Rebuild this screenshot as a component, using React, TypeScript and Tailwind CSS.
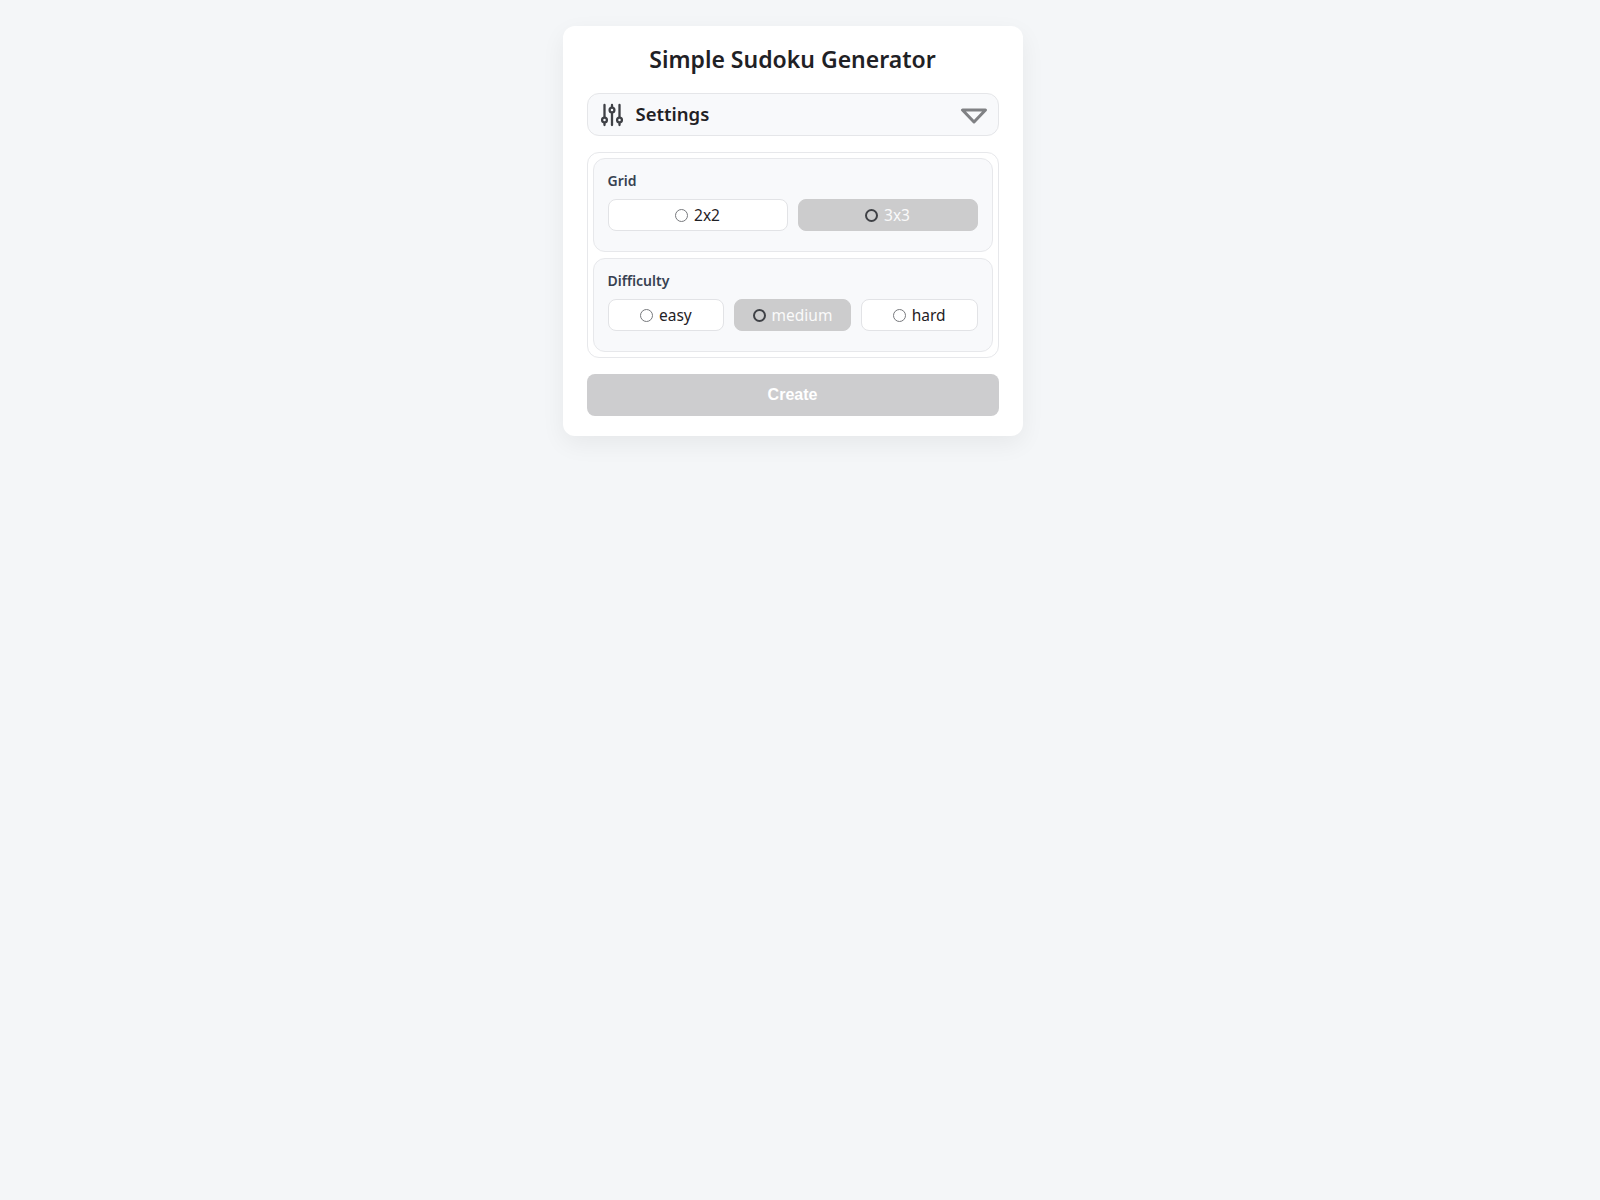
import React from "react";

const ui = "font-['Noto_Sans','Open_Sans',sans-serif]";

function Radio({ label, selected }: { label: string; selected?: boolean }) {
  return (
    <button
      className={
        "flex-1 h-8 flex items-center justify-center gap-[6px] rounded-lg border text-[15.5px] leading-6 " +
        (selected
          ? "bg-[#cccccd] border-[#cccccd] text-[#fafafa]"
          : "bg-white border-[#e2e3e6] text-[#1f2125]")
      }
    >
      <span
        className={
          "w-[13px] h-[13px] rounded-full bg-transparent " +
          (selected ? "border-2 border-[#3f4146]" : "border border-[#77797d]")
        }
      />
      {label}
    </button>
  );
}

function Group({ title, options, selected }: { title: string; options: string[]; selected: string }) {
  return (
    <div className="rounded-xl border border-[#e7e8eb] bg-[#f8f9fb] pt-[13px] px-[14px] h-[94px]">
      <div className="text-[14px] font-semibold leading-[18px] text-[#374151] mb-[9px]">{title}</div>
      <div className="flex gap-[10px]">
        {options.map((o) => (
          <Radio key={o} label={o} selected={o === selected} />
        ))}
      </div>
    </div>
  );
}

export default function App() {
  return (
    <div className={"min-h-[1200px] bg-[#f4f6f8] flex flex-col items-center pt-[26px] pr-[15px] " + ui}>
      <div className="w-[460px] bg-white rounded-xl px-6 py-5 shadow-[0_8px_24px_rgba(0,0,0,0.06)]">
        <h1 className="text-[23px] font-semibold leading-[26px] text-center text-[#1f2125] mb-[21px]">Simple Sudoku Generator</h1>
        <div className="h-[43px] rounded-xl border border-[#e5e6e9] bg-[#f8f9fb] flex items-center justify-between pl-[13px] pr-[10px]">
          <div className="flex items-center gap-[13px]">
            <svg width="22" height="24" viewBox="0 0 22 24" fill="none" stroke="#3f4146" strokeWidth="2.3" strokeLinecap="round">
              <path d="M3.5 2v12M3.5 20v2M11 2v2M11 10v12M18.5 2v12M18.5 20v2" />
              <circle cx="3.5" cy="17" r="2.4" />
              <circle cx="11" cy="7" r="2.4" />
              <circle cx="18.5" cy="17" r="2.4" />
            </svg>
            <span className="text-[18.5px] font-semibold leading-6 -translate-y-px text-[#1f2125]">Settings</span>
          </div>
          <svg className="translate-y-px" width="28" height="16" viewBox="0 0 28 16" fill="none" stroke="#808184" strokeWidth="3">
            <path d="M2.5 2h23L14 14z" strokeLinejoin="round" />
          </svg>
        </div>
        <div className="mt-4 rounded-xl border border-[#e7e8eb] p-[5px] flex flex-col gap-[6px]">
          <Group title="Grid" options={["2x2", "3x3"]} selected="3x3" />
          <Group title="Difficulty" options={["easy", "medium", "hard"]} selected="medium" />
        </div>
        <button className="mt-4 w-full h-[42px] rounded-lg bg-[#cdcdcf] text-white font-bold text-base font-['Liberation_Sans',sans-serif]">
          Create
        </button>
      </div>
    </div>
  );
}
